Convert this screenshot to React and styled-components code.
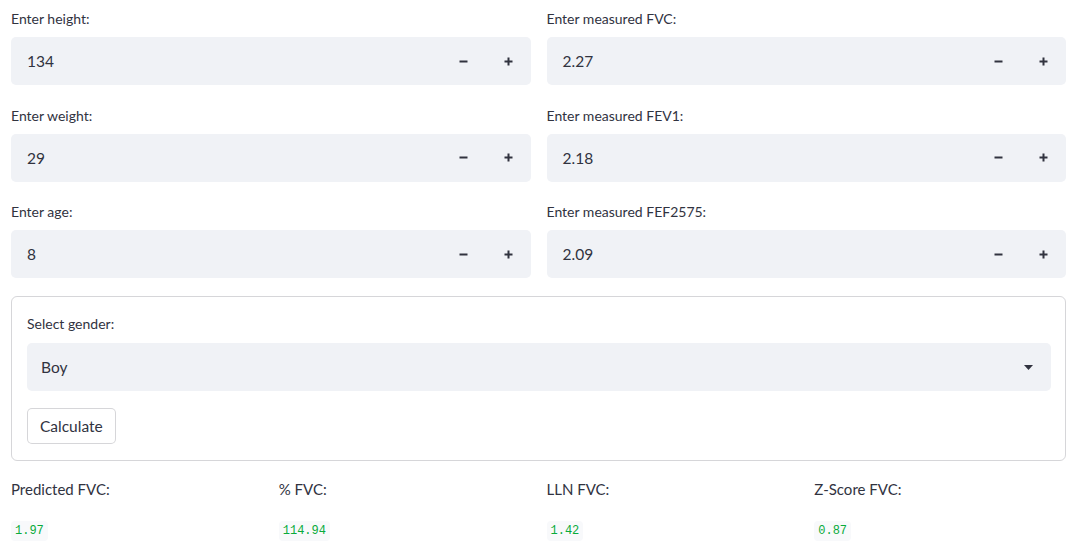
import styled, { createGlobalStyle } from 'styled-components';

const Global = createGlobalStyle`
  body {
    margin: 0;
    background: #ffffff;
    color: rgb(49, 51, 63);
    font-family: Lato, "Noto Sans", sans-serif;
  }
`;

const Page = styled.div`
  padding: 8px 17px 0 11px;
`;

const Grid = styled.div`
  display: grid;
  grid-template-columns: 1fr 1fr;
  column-gap: 16px;
  row-gap: 19.5px;
`;

const Field = styled.div`
  display: flex;
  flex-direction: column;
`;

const Label = styled.label`
  font-size: 14px;
  line-height: 21px;
  margin-bottom: 8px;
`;

const Box = styled.div`
  display: flex;
  align-items: center;
  height: 48px;
  background: #f0f2f6;
  border-radius: 5px;
`;

const Value = styled.span`
  flex: 1;
  padding-left: ${(p) => p.$inset || 16}px;
  font-size: 15.5px;
`;

const Step = styled.button`
  width: 45px;
  height: 100%;
  border: none;
  background: transparent;
  display: flex;
  align-items: center;
  justify-content: center;
  padding: 0;
  color: rgb(49, 51, 63);
`;

const Form = styled.div`
  margin-top: 18px;
  border: 1px solid rgba(49, 51, 63, 0.2);
  border-radius: 6px;
  padding: 16px 14px 16px 15px;
`;

const SelectBox = styled(Box)`
  justify-content: space-between;
  padding-right: 18px;
  margin-top: 1px;
`;

const Button = styled.button`
  margin-top: 17px;
  height: 36px;
  padding: 0 12px;
  background: #fff;
  border: 1px solid rgba(49, 51, 63, 0.2);
  border-radius: 5px;
  font-family: inherit;
  font-size: 15.5px;
  color: rgb(49, 51, 63);
`;

const Metrics = styled.div`
  display: grid;
  grid-template-columns: repeat(4, 1fr);
  column-gap: 16px;
  margin-top: 16px;
`;

const Metric = styled.div`
  display: flex;
  flex-direction: column;
  align-items: flex-start;
`;

const MetricLabel = styled.div`
  font-size: 15px;
  line-height: 24px;
`;

const Code = styled.code`
  margin-top: 20px;
  background: #f8f9fb;
  color: rgb(9, 171, 59);
  font-family: "Liberation Mono", monospace;
  font-size: 12px;
  line-height: 20px;
  padding: 0 4px;
  border-radius: 4px;
`;

const Minus = () => (
  <svg width="9" height="9" viewBox="0 0 9 9">
    <path d="M0.5 4.5h8" stroke="currentColor" strokeWidth="2" />
  </svg>
);

const Plus = () => (
  <svg width="9" height="9" viewBox="0 0 9 9">
    <path d="M0.5 4.5h8M4.5 0.5v8" stroke="currentColor" strokeWidth="2" />
  </svg>
);

const fields = [
  ['Enter height:', '134'],
  ['Enter measured FVC:', '2.27'],
  ['Enter weight:', '29'],
  ['Enter measured FEV1:', '2.18'],
  ['Enter age:', '8'],
  ['Enter measured FEF2575:', '2.09'],
];

const results = [
  ['Predicted FVC:', '1.97'],
  ['% FVC:', '114.94'],
  ['LLN FVC:', '1.42'],
  ['Z-Score FVC:', '0.87'],
];

export default function App() {
  return (
    <Page>
      <Global />
      <Grid>
        {fields.map(([label, value]) => (
          <Field key={label}>
            <Label>{label}</Label>
            <Box>
              <Value>{value}</Value>
              <Step><Minus /></Step>
              <Step><Plus /></Step>
            </Box>
          </Field>
        ))}
      </Grid>
      <Form>
        <Field>
          <Label>Select gender:</Label>
          <SelectBox>
            <Value $inset={14}>Boy</Value>
            <svg width="9" height="5" viewBox="0 0 9 5">
              <path d="M0 0h9L4.5 5z" fill="currentColor" />
            </svg>
          </SelectBox>
        </Field>
        <Button>Calculate</Button>
      </Form>
      <Metrics>
        {results.map(([label, value]) => (
          <Metric key={label}>
            <MetricLabel>{label}</MetricLabel>
            <Code>{value}</Code>
          </Metric>
        ))}
      </Metrics>
    </Page>
  );
}
